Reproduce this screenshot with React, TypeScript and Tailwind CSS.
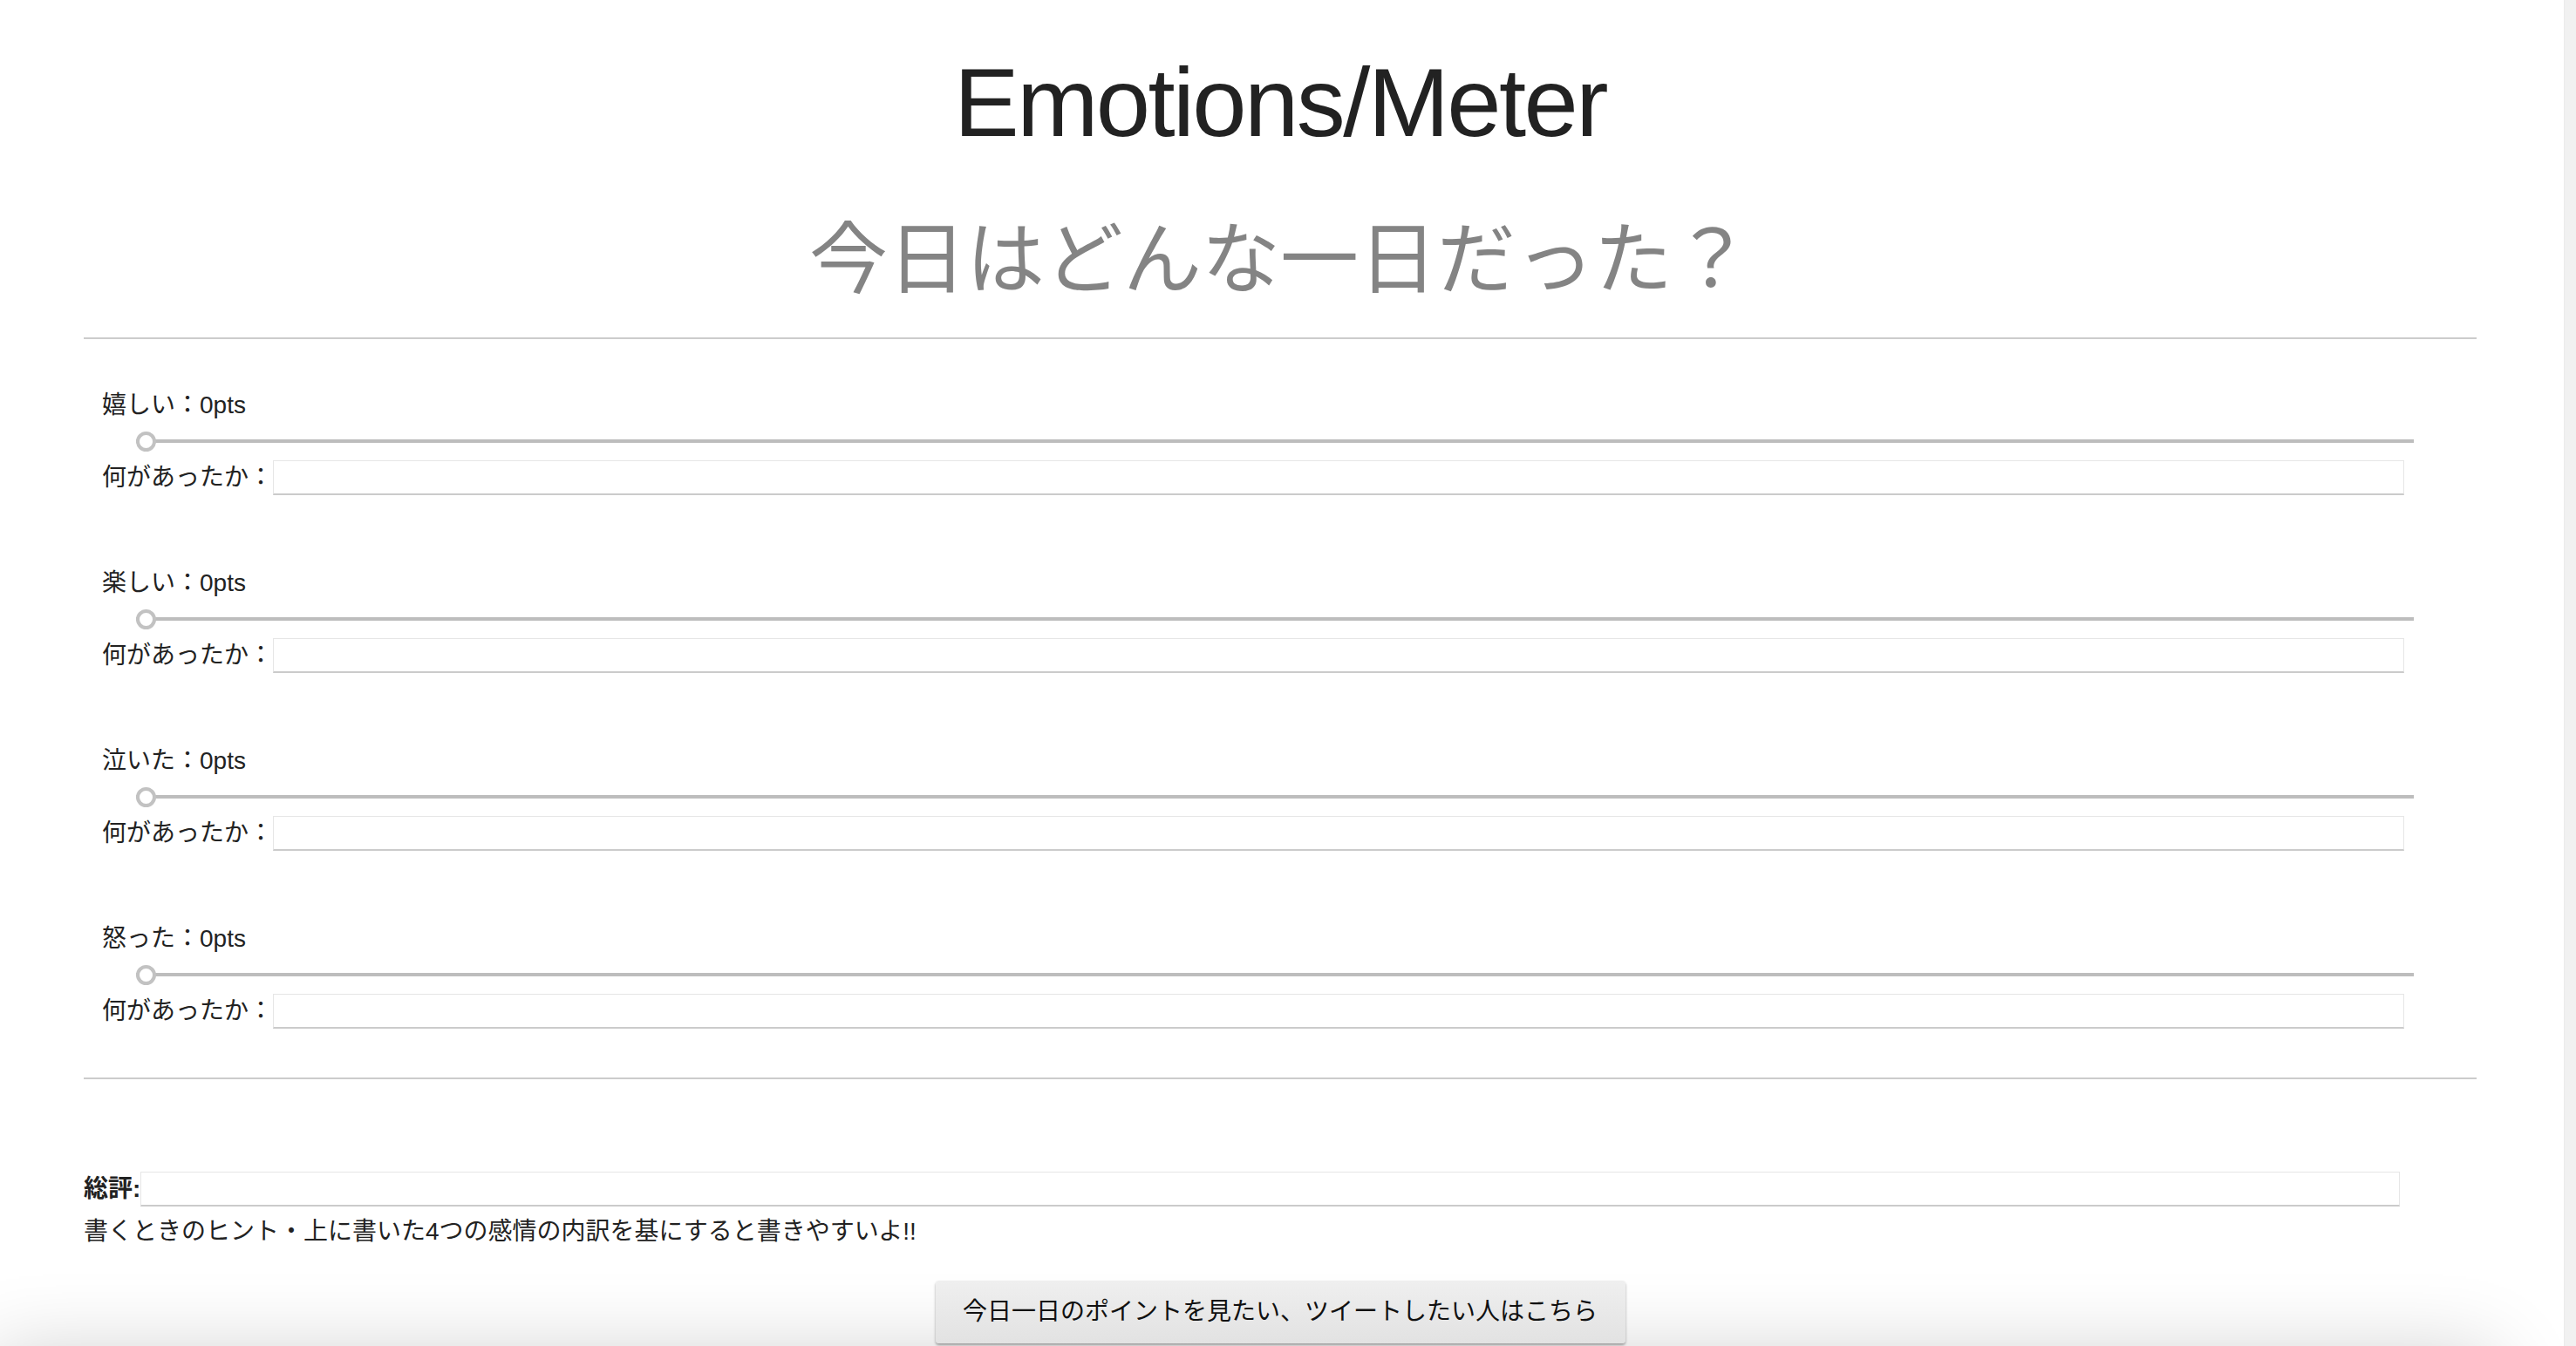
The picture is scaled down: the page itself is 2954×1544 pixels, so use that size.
import { useState } from "react";

const emotions = ["嬉しい", "楽しい", "泣いた", "怒った"];

type EmotionRowProps = {
  label: string;
  value: number;
  onChange: (v: number) => void;
};

const EmotionRow = ({ label, value, onChange }: EmotionRowProps) => {
  return (
    <div>
      <p className="ml-[21px] text-[28px] leading-[28px] text-[#222]">
        {label}：{value}pts
      </p>
      <div className="mt-[15px] flex pl-[60px] pr-[72px]">
        <input
          type="range"
          min={0}
          max={100}
          value={value}
          onChange={(e) => onChange(Number(e.target.value))}
          className="h-[24px] flex-1 cursor-pointer appearance-none bg-transparent [&::-webkit-slider-runnable-track]:h-[4px] [&::-webkit-slider-runnable-track]:bg-[#bdbdbd] [&::-webkit-slider-thumb]:mt-[-9.5px] [&::-webkit-slider-thumb]:h-[23px] [&::-webkit-slider-thumb]:w-[23px] [&::-webkit-slider-thumb]:appearance-none [&::-webkit-slider-thumb]:rounded-full [&::-webkit-slider-thumb]:border-[4px] [&::-webkit-slider-thumb]:border-solid [&::-webkit-slider-thumb]:border-[#c2c2c2] [&::-webkit-slider-thumb]:bg-white"
        />
      </div>
      <div className="mt-[10px] flex items-center pl-[21px] pr-[83px]">
        <label className="text-[28px] leading-[28px] text-[#222]">何があったか：</label>
        <input
          type="text"
          className="h-[40px] flex-1 border border-[#e6e6e6] border-b-2 border-b-[#cbcbcb] bg-white px-2 text-[27px] outline-none"
        />
      </div>
    </div>
  );
};

export default function App() {
  const [values, setValues] = useState<number[]>([0, 0, 0, 0]);

  const setValue = (i: number, v: number) => {
    const next = [...values];
    next[i] = v;
    setValues(next);
  };

  return (
    <div className="flex h-[1544px] w-full overflow-hidden bg-white font-['Liberation_Sans','Noto_Sans_CJK_JP',sans-serif]">
      <div className="min-w-0 flex-1">
        <div className="ml-[96px] mr-[100px]">
          <h1 className="pt-[62px] text-center text-[112px] leading-[112px] font-normal tracking-[-2.6px] text-[#222]">
            Emotions/Meter
          </h1>
          <h2 className="mt-[71px] text-center font-['Noto_Sans_CJK_JP',sans-serif] text-[90px] leading-[90px] font-normal text-[#848484]">
            今日はどんな一日だった？
          </h2>
          <hr className="mt-[52px] border-t-2 border-[#cccccc]" />

          <div className="flex flex-col gap-[87px] pt-[62px]">
            {emotions.map((emotion, i) => (
              <EmotionRow
                key={emotion}
                label={emotion}
                value={values[i]}
                onChange={(v) => setValue(i, v)}
              />
            ))}
          </div>

          <hr className="mt-[56px] border-t-2 border-[#cccccc]" />

          <div className="mt-[106px] flex items-center pr-[88px]">
            <label className="text-[28px] leading-[28px] font-bold text-[#222]">総評:</label>
            <input
              type="text"
              className="h-[40px] flex-1 border border-[#e6e6e6] border-b-2 border-b-[#cbcbcb] bg-white px-2 text-[27px] outline-none"
            />
          </div>
          <p className="mt-[15px] text-[28px] leading-[28px] text-[#222]">
            書くときのヒント・上に書いた4つの感情の内訳を基にすると書きやすいよ!!
          </p>

          <div className="mt-[42px] flex justify-center">
            <button className="h-[72px] w-[791px] rounded-[4px] bg-gradient-to-b from-[#efefef] to-[#e2e2e2] text-[28px] text-[#111] shadow-[0_2px_3px_rgba(0,0,0,0.35)]">
              今日一日のポイントを見たい、ツイートしたい人はこちら
            </button>
          </div>
        </div>

        <div className="mr-[90px] mt-[24px] h-[400px] bg-white shadow-[0_0_90px_10px_rgba(0,0,0,0.2)]" />
      </div>
      <div className="w-[14px] shrink-0 border-l border-[#ebebeb] bg-[#f1f1f1]" />
    </div>
  );
}
